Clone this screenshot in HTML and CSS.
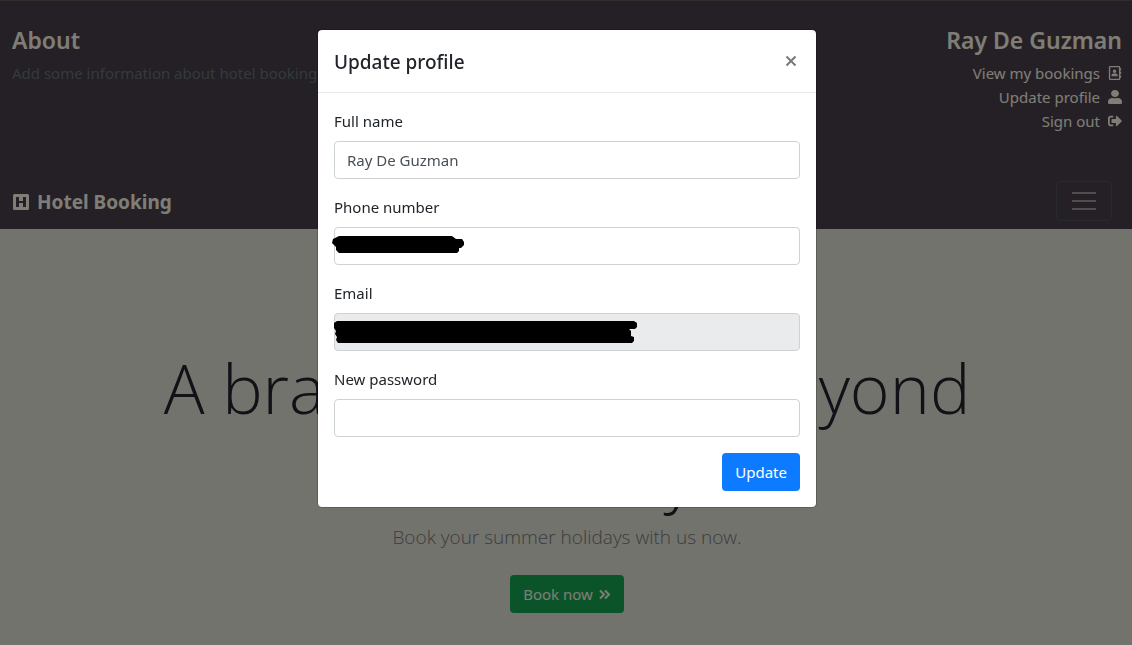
FILE: index.html
```html
<!DOCTYPE html>
<html lang="en">
<head>
<meta charset="utf-8">
<meta name="viewport" content="width=device-width, initial-scale=1">
<title>Hotel Booking</title>
<link rel="stylesheet" href="styles.css">
</head>
<body>
<header class="site-header">
  <div class="header-panel">
    <section class="about">
      <h4 class="panel-title">About</h4>
      <p class="about-text">Add some information about hotel booking</p>
    </section>
    <section class="account">
      <h4 class="panel-title">Ray De Guzman</h4>
      <ul class="account-links">
        <li><a href="#">View my bookings
          <svg class="icon" viewBox="0 0 14 16" aria-hidden="true"><path fill-rule="evenodd" d="M1.500 0h10A1.500 1.500 0 0 1 13 1.500v13a1.500 1.500 0 0 1-1.500 1.500h-10A1.500 1.500 0 0 1 0 14.500v-13A1.500 1.500 0 0 1 1.500 0zm0 1.500v13h10v-13zM6.500 4a2 2 0 1 1 0 4 2 2 0 0 1 0-4zM3 11.800v-.9C3 9.600 3.900 8.600 5 8.600h3c1.100 0 2 1 2 2.300v.9zM13 2.500h1v2.500h-1zM13 6.700h1v2.500h-1zM13 10.900h1v2.500h-1z"/></svg></a></li>
        <li><a href="#">Update profile
          <svg class="icon" viewBox="0 0 448 512" preserveAspectRatio="none" aria-hidden="true"><path d="M224 256c70.700 0 128-57.300 128-128S294.700 0 224 0 96 57.300 96 128s57.300 128 128 128zm89.600 32h-16.700c-22.200 10.200-46.900 16-72.900 16s-50.600-5.800-72.900-16h-16.700C60.200 288 0 348.200 0 422.400V464c0 26.500 21.500 48 48 48h352c26.500 0 48-21.500 48-48v-41.600c0-74.200-60.200-134.400-134.400-134.400z"/></svg></a></li>
        <li><a href="#">Sign out
          <svg class="icon" viewBox="0 0 512 512" aria-hidden="true"><path d="M497 273L329 441c-15 15-41 4.500-41-17v-96H152c-13.300 0-24-10.700-24-24v-96c0-13.300 10.700-24 24-24h136V88c0-21.400 25.900-32 41-17l168 168c9.300 9.400 9.300 24.600 0 34zM192 436v-40c0-6.600-5.400-12-12-12H96c-17.700 0-32-14.300-32-32V160c0-17.700 14.300-32 32-32h84c6.600 0 12-5.400 12-12V76c0-6.600-5.400-12-12-12H96c-53 0-96 43-96 96v192c0 53 43 96 96 96h84c6.600 0 12-5.400 12-12z"/></svg></a></li>
      </ul>
    </section>
  </div>
  <nav class="navbar">
    <a class="brand" href="#">
      <svg class="brand-icon" viewBox="0 0 16 16" aria-hidden="true"><path fill-rule="evenodd" d="M1.500 0h13A1.500 1.500 0 0 1 16 1.500v13a1.500 1.500 0 0 1-1.500 1.500h-13A1.500 1.500 0 0 1 0 14.500v-13A1.500 1.500 0 0 1 1.500 0zM3 3v10h3V9h4v4h3V3h-3v4H6V3z"/></svg>
      Hotel Booking</a>
    <button class="toggler" type="button" aria-label="Toggle navigation">
      <svg class="toggler-icon" viewBox="0 0 30 30" aria-hidden="true"><path d="M3 7h24M3 15h24M3 23h24"/></svg>
    </button>
  </nav>
</header>

<main class="hero">
  <h1 class="hero-title">A brand new hotel beyond<br>ordinary</h1>
  <p class="hero-text">Book your summer holidays with us now.</p>
  <a class="btn btn-success" href="#">Book now
    <svg class="chevrons" viewBox="0 0 13 12" aria-hidden="true"><path d="M2 2.500L6 6.500l-4 4M7 2.500l4 4-4 4"/></svg></a>
</main>

<div class="backdrop">
  <div class="modal" role="dialog" aria-modal="true" aria-labelledby="modal-title">
    <div class="modal-header">
      <h5 class="modal-title" id="modal-title">Update profile</h5>
      <button class="close" type="button" aria-label="Close">
        <svg class="close-icon" viewBox="0 0 12 12" aria-hidden="true"><path d="M1.500 1.500l9 9M10.500 1.500l-9 9"/></svg>
      </button>
    </div>
    <form class="modal-body">
      <div class="field">
        <label for="name">Full name</label>
        <input class="control" id="name" type="text" value="Ray De Guzman">
      </div>
      <div class="field">
        <label for="phone">Phone number</label>
        <div class="masked">
          <input class="control" id="phone" type="tel">
          <svg class="mask mask-phone" viewBox="0 0 133 18" aria-hidden="true"><path d="M7 0h113l4 3h6l2 3v3l-3 3h-2v3l-2 2H7l-3-3v-3l-4-4 1-4z"/></svg>
        </div>
      </div>
      <div class="field">
        <label for="email">Email</label>
        <div class="masked">
          <input class="control" id="email" type="email" readonly>
          <svg class="mask mask-email" viewBox="0 0 303 22" aria-hidden="true"><path d="M3 0h297l3 2v4l-2 2h-6l2 2v5l3 1v4l-2 2H4l-2-3 1-3-2-3 1-3-2-3V2z"/></svg>
        </div>
      </div>
      <div class="field">
        <label for="password">New password</label>
        <input class="control" id="password" type="password">
      </div>
      <div class="actions">
        <button class="btn btn-primary" type="submit">Update</button>
      </div>
    </form>
  </div>
</div>
</body>
</html>
```

FILE: styles.css
```css
* {
  box-sizing: border-box;
}

body {
  margin: 0;
  min-height: 100vh;
  display: flex;
  flex-direction: column;
  border-top: 1px solid #5c5e58;
  border-bottom: 1px solid #b8b8b0;
  background: #e6e6db;
  color: #212529;
  font: 15px/24px "Noto Sans", "Open Sans", sans-serif;
}

h1, h4, h5, p, ul {
  margin: 0;
}

a {
  color: inherit;
  text-decoration: none;
}

.site-header {
  background: #4b414d;
  color: #fffcec;
}

.header-panel {
  display: flex;
  justify-content: space-between;
  min-height: 172px;
  padding: 25px 10px 0 12px;
}

.panel-title {
  margin-bottom: 6px;
  font-size: 23px;
  line-height: 29px;
  font-weight: 600;
}

.about-text {
  color: #65757a;
}

.account {
  text-align: right;
}

.account-links {
  padding: 0;
  list-style: none;
}

.account-links a {
  display: flex;
  align-items: center;
  justify-content: flex-end;
  gap: 8px;
}

.icon {
  width: 14px;
  height: 14px;
  fill: currentColor;
}

.navbar {
  display: flex;
  align-items: center;
  justify-content: space-between;
  padding: 8px 20px 8px 13px;
}

.brand {
  display: flex;
  align-items: center;
  gap: 8px;
  padding-top: 2px;
  font-size: 19px;
  font-weight: 700;
}

.brand-icon {
  width: 16px;
  height: 16px;
  fill: currentColor;
}

.toggler {
  display: flex;
  align-items: center;
  justify-content: center;
  width: 56px;
  height: 40px;
  padding: 0;
  border: 1px solid #505558;
  border-radius: 4px;
  background: transparent;
}

.toggler-icon {
  width: 30px;
  height: 30px;
  fill: none;
  stroke: #a39f9a;
  stroke-width: 2;
}

.hero {
  flex: 1;
  display: flex;
  flex-direction: column;
  align-items: center;
  padding: 116px 14px 32px 16px;
  text-align: center;
}

.hero-title {
  color: #23222e;
  font-family: "Open Sans", "Noto Sans", sans-serif;
  font-size: 68px;
  line-height: 86px;
  font-weight: 300;
}

.hero-text {
  margin: 5px 0 23px;
  color: #777b7d;
  font-family: "Open Sans", "Noto Sans", sans-serif;
  font-size: 19px;
  line-height: 30px;
  font-weight: 300;
}

.btn {
  display: flex;
  align-items: center;
  justify-content: center;
  gap: 5px;
  height: 38px;
  padding: 0 13px;
  border: 0;
  border-radius: 4px;
  font: inherit;
}

.btn-success {
  background: #17a955;
  color: #fffcec;
}

.btn-primary {
  background: #0d7bff;
  color: #fff;
}

.chevrons {
  width: 13px;
  height: 12px;
  fill: none;
  stroke: currentColor;
  stroke-width: 2;
}

.backdrop {
  position: fixed;
  inset: 0;
  display: flex;
  align-items: flex-start;
  justify-content: center;
  padding: 29px 0 0 2px;
  background: rgba(0, 0, 0, 0.5);
}

.modal {
  width: 100%;
  max-width: 500px;
  border: 1px solid rgba(0, 0, 0, 0.2);
  border-radius: 5px;
  background: #fff;
  background-clip: padding-box;
}

.modal-header {
  display: flex;
  align-items: center;
  justify-content: space-between;
  padding: 17px 16px 15px;
  border-bottom: 1px solid #e6e8e9;
}

.modal-title {
  font-size: 19px;
  line-height: 30px;
  font-weight: 500;
}

.close {
  display: flex;
  padding: 0 3px 2px;
  border: 0;
  background: transparent;
}

.close-icon {
  width: 12px;
  height: 12px;
  fill: none;
  stroke: #7b7874;
  stroke-width: 2;
}

.modal-body {
  display: flex;
  flex-direction: column;
  gap: 16px;
  padding: 16px;
}

.field {
  display: flex;
  flex-direction: column;
  gap: 8px;
}

.control {
  display: block;
  width: 100%;
  height: 38px;
  padding: 0 12px;
  border: 1px solid #cdd2d4;
  border-radius: 4px;
  outline: 0;
  background: #fff;
  color: #495057;
  font: inherit;
}

.control:read-only {
  background: #e9ebec;
}

.masked {
  position: relative;
}

.mask {
  position: absolute;
}

.mask-phone {
  top: 9px;
  left: -2px;
  width: 133px;
  height: 18px;
}

.mask-email {
  top: 8px;
  left: 0;
  width: 303px;
  height: 22px;
}

.actions {
  display: flex;
  justify-content: flex-end;
}
```
